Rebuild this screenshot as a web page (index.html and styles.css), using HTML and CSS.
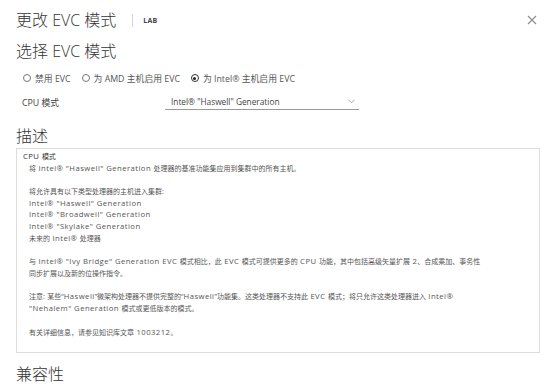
FILE: index.html
```html
<!DOCTYPE html>
<html lang="zh-CN">
<head>
  <meta charset="UTF-8" />
  <title>更改 EVC 模式</title>
  <link rel="stylesheet" href="styles.css">
</head>
<body>
  <div class="modal">
    <header class="modal-header">
      <h1 class="modal-title">更改 EVC 模式</h1>
      <span class="divider"></span>
      <span class="host">LAB</span>
      <button class="close" type="button" aria-label="关闭">
        <svg width="10" height="10" viewBox="0 0 10 10">
          <path d="M1 1 L9 9 M9 1 L1 9" stroke="#8c8c8c" stroke-width="1.1" fill="none"/>
        </svg>
      </button>
    </header>

    <h2 class="section-title">选择 EVC 模式</h2>
    <div class="radio-row">
      <label class="radio"><span class="dot"></span>禁用 EVC</label>
      <label class="radio"><span class="dot"></span>为 AMD 主机启用 EVC</label>
      <label class="radio"><span class="dot checked"></span>为 Intel® 主机启用 EVC</label>
    </div>

    <div class="field-row">
      <span class="field-label">CPU 模式</span>
      <div class="select">
        <span>Intel® "Haswell" Generation</span>
        <svg width="7" height="5" viewBox="0 0 7 5">
          <path d="M0.5 0.8 L3.5 3.8 L6.5 0.8" stroke="#9a9a9a" stroke-width="0.9" fill="none"/>
        </svg>
      </div>
    </div>

    <h2 class="section-title desc-title">描述</h2>
    <div class="desc-box">
      <div class="desc-head"><span class="en">CPU </span>模式</div>
      <p>将<span class="en"> Intel® "Haswell" Generation </span>处理器的基准功能集应用到集群中的所有主机。</p>
      <p>将允许具有以下类型处理器的主机进入集群:<br>
        <span class="en">Intel® "Haswell" Generation</span><br>
        <span class="en">Intel® "Broadwell" Generation</span><br>
        <span class="en">Intel® "Skylake" Generation</span><br>
        未来的<span class="en"> Intel® </span>处理器</p>
      <p>与<span class="en"> Intel® "Ivy Bridge" Generation EVC </span>模式相比，此<span class="en"> EVC </span>模式可提供更多的<span class="en"> CPU </span>功能，其中包括高级矢量扩展<span class="en"> 2</span>、合成乘加、事务性<br>
        同步扩展以及新的位操作指令。</p>
      <p>注意:<span class="en"> </span>某些“<span class="en">Haswell</span>”微架构处理器不提供完整的“<span class="en">Haswell</span>”功能集。这类处理器不支持此<span class="en"> EVC </span>模式；将只允许这类处理器进入<span class="en"> Intel®</span><br>
        <span class="en">"Nehalem" Generation </span>模式或更低版本的模式。</p>
      <p>有关详细信息，请参见知识库文章<span class="en"> 1003212</span>。</p>
    </div>

    <h2 class="section-title">兼容性</h2>
  </div>
</body>
</html>
```

FILE: styles.css
```css
* {
  box-sizing: border-box;
}

body {
  margin: 0;
  background: #fff;
  font-family: "Open Sans", "Noto Sans CJK SC", sans-serif;
  color: #555;
}

.modal {
  width: 554px;
  padding: 0 14px 0 16px;
}

.modal-header {
  display: flex;
  align-items: center;
  height: 40px;
}

.modal-title {
  margin: 0;
  font-size: 16px;
  font-weight: 300;
  color: #333;
  line-height: 20px;
}

.divider {
  width: 1px;
  height: 13px;
  background: #d4d4d4;
  margin: 0 10px 0 16px;
}

.host {
  font-size: 7px;
  font-weight: 700;
  color: #444;
  letter-spacing: 0.2px;
}

.close {
  margin-left: auto;
  margin-right: 3px;
  border: none;
  background: none;
  padding: 0;
  display: flex;
}

.section-title {
  margin: 1px 0 0;
  font-size: 16px;
  font-weight: 300;
  color: #333;
  line-height: 20px;
}

.radio-row {
  display: flex;
  align-items: center;
  gap: 11px;
  margin-top: 11px;
  padding-left: 7px;
  height: 12px;
  font-size: 8.8px;
  color: #565656;
}

.radio {
  display: flex;
  align-items: center;
  gap: 4px;
}

.dot {
  width: 8px;
  height: 8px;
  border: 1px solid #777;
  border-radius: 50%;
  position: relative;
}

.dot.checked {
  border-color: #333;
}

.dot.checked::after {
  content: "";
  position: absolute;
  left: 1.5px;
  top: 1.5px;
  width: 3px;
  height: 3px;
  border-radius: 50%;
  background: #222;
}

.field-row {
  display: flex;
  align-items: center;
  margin-top: 10px;
  padding-left: 6px;
  height: 16px;
  font-size: 8.8px;
  color: #444;
}

.field-label {
  width: 143px;
}

.select {
  width: 194px;
  height: 16px;
  display: flex;
  align-items: center;
  justify-content: space-between;
  padding: 0 4px 0 6px;
  border-bottom: 1px solid #9a9a9a;
  font-size: 8.3px;
  color: #444;
}

.desc-title {
  margin-top: 16px;
}

.desc-box {
  margin-top: 2px;
  width: 524px;
  height: 205px;
  border: 1px solid #ddd;
  padding: 2px 8px 0 6px;
  font-size: 7px;
  line-height: 11.6px;
}

.en {
  font-size: 7.7px;
  line-height: 8px;
  letter-spacing: 0.45px;
}

.desc-head {
  color: #333;
}

.desc-box p {
  margin: 0 0 12px 6px;
  white-space: nowrap;
}

.desc-box p:last-child {
  margin-bottom: 0;
}

.desc-box + .section-title {
  margin-top: 11px;
}
```
